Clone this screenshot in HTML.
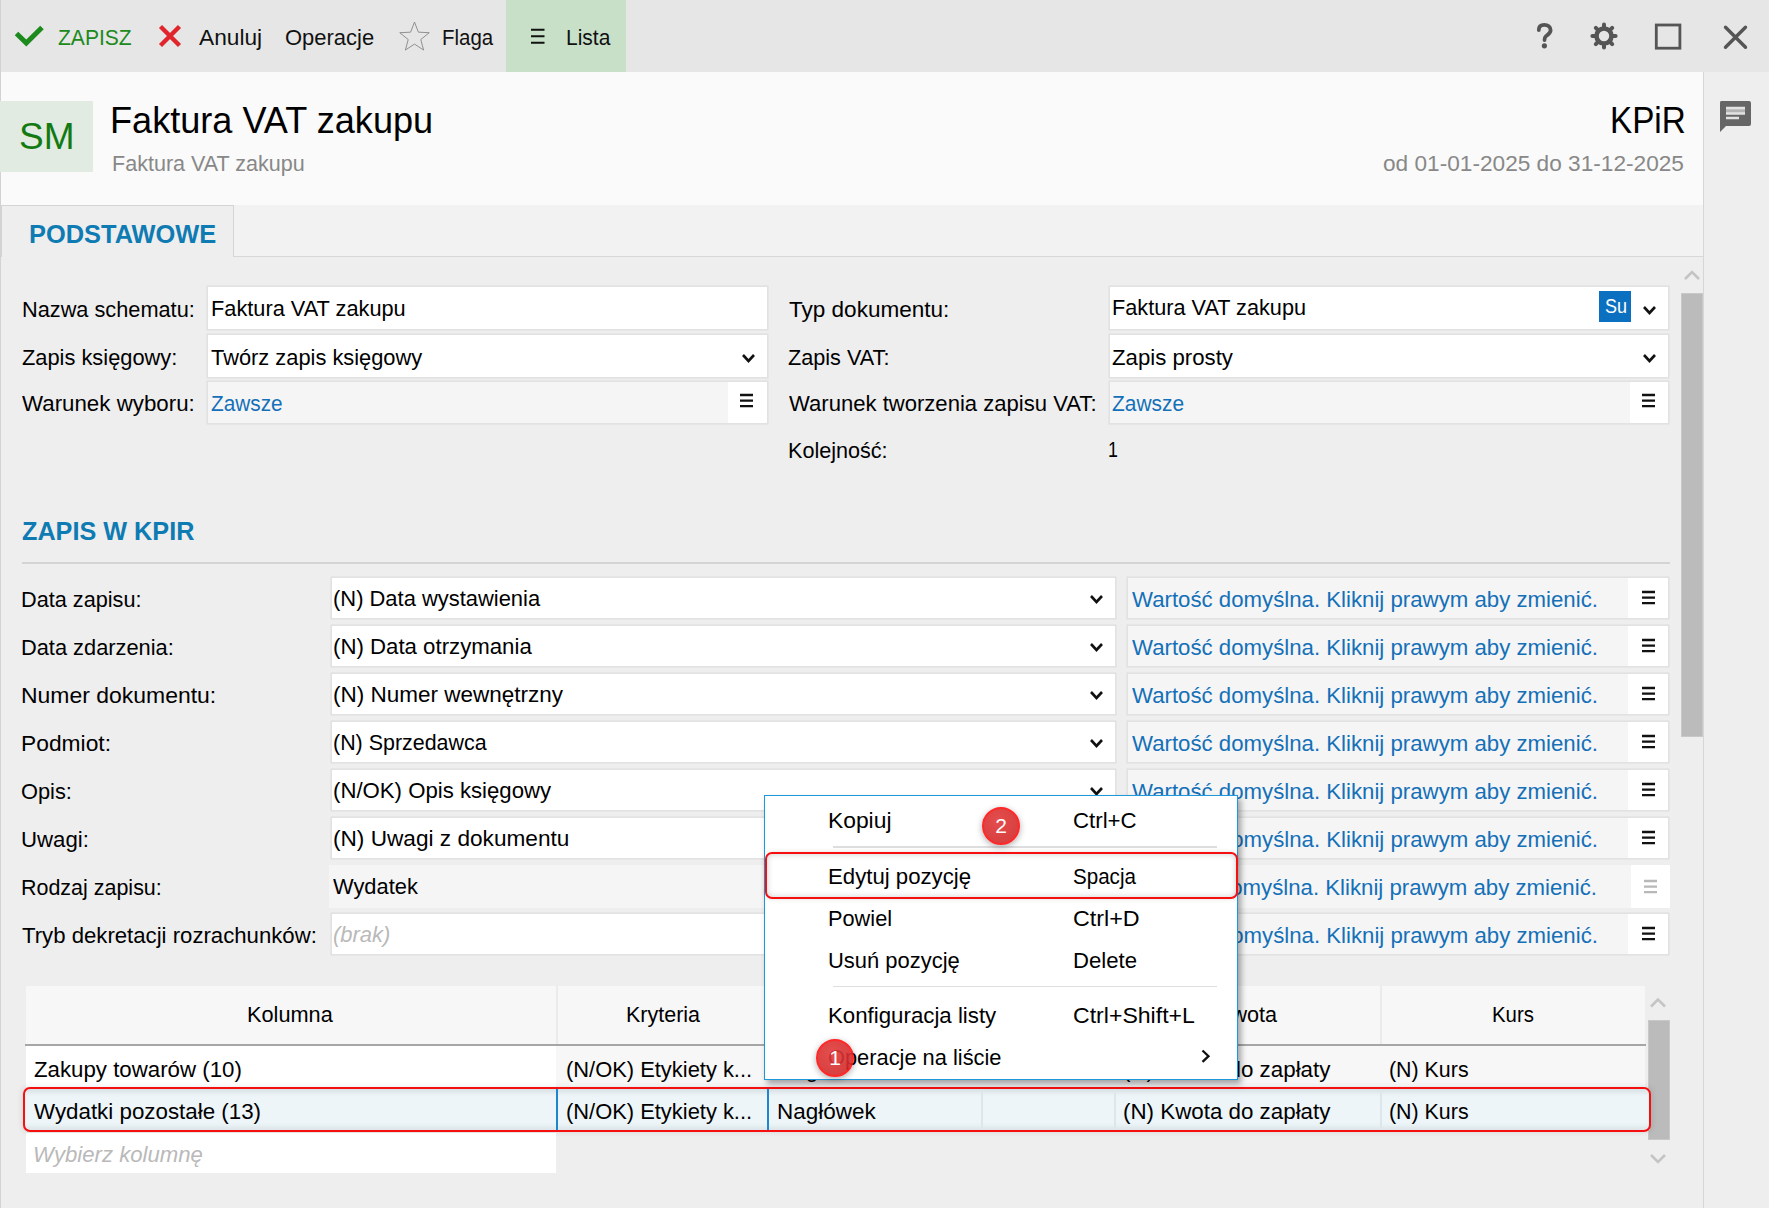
<!DOCTYPE html>
<html><head><meta charset="utf-8"><title>Faktura VAT zakupu</title>
<style>
html,body{margin:0;padding:0;}
body{width:1769px;height:1208px;position:relative;overflow:hidden;font-family:"Liberation Sans", sans-serif;background:#eeeeee;}
svg{overflow:visible}
</style></head><body>
<div style="position:absolute;left:0px;top:0px;width:1769px;height:72px;background:#e6e6e6;"></div>
<div style="position:absolute;left:0px;top:72px;width:1703px;height:133px;background:#fafafa;"></div>
<div style="position:absolute;left:0px;top:205px;width:1703px;height:52px;background:#f2f2f2;"></div>
<div style="position:absolute;left:0px;top:257px;width:1703px;height:951px;background:#eeeeee;"></div>
<div style="position:absolute;left:1703px;top:72px;width:66px;height:1136px;background:#eeeeee;"></div>
<div style="position:absolute;left:1703px;top:72px;width:1px;height:1136px;background:#d6d6d6;"></div>
<div style="position:absolute;left:0px;top:0px;width:1px;height:1208px;background:#d2d2d2;"></div>
<svg style="position:absolute;left:10px;top:20px;" width="40" height="32" viewBox="0 0 40 32"><polyline points="6.5,13.5 16.3,23 32,7.5" fill="none" stroke="#1c8a1c" stroke-width="5"/></svg>
<div style="position:absolute;top:27.200000000000003px;font-size:22px;line-height:22px;color:#1c8a1c;white-space:nowrap;left:57.70px;transform:scaleX(0.9573);transform-origin:0 0;">ZAPISZ</div>
<svg style="position:absolute;left:155px;top:21px;" width="30" height="30" viewBox="0 0 30 30"><path d="M5.5,5.5 L24.5,24.5 M24.5,5.5 L5.5,24.5" stroke="#e0262c" stroke-width="4.4"/></svg>
<div style="position:absolute;top:27px;font-size:22px;line-height:22px;color:#111;white-space:nowrap;left:199.00px;transform:scaleX(1.0321);transform-origin:0 0;">Anuluj</div>
<div style="position:absolute;top:27px;font-size:22px;line-height:22px;color:#111;white-space:nowrap;left:284.80px;transform:scaleX(0.9985);transform-origin:0 0;">Operacje</div>
<svg style="position:absolute;left:399px;top:21.3px;" width="32" height="34" viewBox="0 0 32 34"><polygon points="15.50,1.00 19.38,11.16 30.24,11.71 21.78,18.54 24.61,29.04 15.50,23.10 6.39,29.04 9.22,18.54 0.76,11.71 11.62,11.16" fill="none" stroke="#909090" stroke-width="1"/></svg>
<div style="position:absolute;top:27px;font-size:22px;line-height:22px;color:#111;white-space:nowrap;left:441.77px;transform:scaleX(0.9289);transform-origin:0 0;">Flaga</div>
<div style="position:absolute;left:506px;top:0px;width:120px;height:72px;background:#c8e0c8;"></div>
<svg style="position:absolute;left:528px;top:26px;" width="20" height="20" viewBox="0 0 20 20"><path d="M3,3.8 H16.5 M3,10.3 H16.5 M3,16.7 H16.5" stroke="#111" stroke-width="2"/></svg>
<div style="position:absolute;top:27px;font-size:22px;line-height:22px;color:#111;white-space:nowrap;left:565.55px;transform:scaleX(0.9538);transform-origin:0 0;">Lista</div>
<svg style="position:absolute;left:1532px;top:20px;" width="26" height="32" viewBox="0 0 26 32"><path d="M6.8,10 C6.8,6.3 9.3,4.8 12.3,4.8 C15.8,4.8 18.6,6.8 18.6,10.2 C18.6,13.2 15.8,14.6 13.8,16.4 C12.9,17.2 12.5,18 12.5,20" fill="none" stroke="#555" stroke-width="3.8" stroke-linecap="round"/><circle cx="12.4" cy="25.8" r="2.6" fill="#555"/></svg>
<svg style="position:absolute;left:1591px;top:23px;" width="26" height="26" viewBox="0 0 26 26"><line x1="21.50" y1="13.00" x2="24.60" y2="13.00" stroke="#555" stroke-width="4.0" stroke-linecap="round"/><line x1="19.01" y1="19.01" x2="21.20" y2="21.20" stroke="#555" stroke-width="4.0" stroke-linecap="round"/><line x1="13.00" y1="21.50" x2="13.00" y2="24.60" stroke="#555" stroke-width="4.0" stroke-linecap="round"/><line x1="6.99" y1="19.01" x2="4.80" y2="21.20" stroke="#555" stroke-width="4.0" stroke-linecap="round"/><line x1="4.50" y1="13.00" x2="1.40" y2="13.00" stroke="#555" stroke-width="4.0" stroke-linecap="round"/><line x1="6.99" y1="6.99" x2="4.80" y2="4.80" stroke="#555" stroke-width="4.0" stroke-linecap="round"/><line x1="13.00" y1="4.50" x2="13.00" y2="1.40" stroke="#555" stroke-width="4.0" stroke-linecap="round"/><line x1="19.01" y1="6.99" x2="21.20" y2="4.80" stroke="#555" stroke-width="4.0" stroke-linecap="round"/><circle cx="13" cy="13" r="7.5" fill="none" stroke="#555" stroke-width="4.6"/></svg>
<svg style="position:absolute;left:1654px;top:22px;" width="29" height="29" viewBox="0 0 29 29"><rect x="2.3" y="3" width="23.6" height="23.2" fill="none" stroke="#555" stroke-width="2.8"/></svg>
<svg style="position:absolute;left:1721px;top:23px;" width="29" height="29" viewBox="0 0 29 29"><path d="M4.5,4.2 L24.5,24.2 M24.5,4.2 L4.5,24.2" stroke="#555" stroke-width="3.4" stroke-linecap="round"/></svg>
<div style="position:absolute;left:0px;top:101px;width:93px;height:71px;background:#e1ebe1;"></div>
<div style="position:absolute;top:118px;font-size:37px;line-height:37px;color:#137a13;white-space:nowrap;left:18.80px;transform:scaleX(1.0004);transform-origin:0 0;">SM</div>
<div style="position:absolute;top:102px;font-size:37px;line-height:37px;color:#000;white-space:nowrap;left:110.27px;transform:scaleX(0.9759);transform-origin:0 0;">Faktura VAT zakupu</div>
<div style="position:absolute;top:153px;font-size:22px;line-height:22px;color:#888888;white-space:nowrap;left:112.02px;transform:scaleX(0.9793);transform-origin:0 0;">Faktura VAT zakupu</div>
<div style="position:absolute;top:102px;font-size:37px;line-height:37px;color:#000;white-space:nowrap;left:1609.80px;transform:scaleX(0.8985);transform-origin:0 0;">KPiR</div>
<div style="position:absolute;top:152.5px;font-size:22px;line-height:22px;color:#888888;white-space:nowrap;left:1383.30px;transform:scaleX(1.0294);transform-origin:0 0;">od 01-01-2025 do 31-12-2025</div>
<svg style="position:absolute;left:1717px;top:98px;" width="36" height="36" viewBox="0 0 36 36"><path d="M4,3 H32 Q34,3 34,5 V26 Q34,28 32,28 H9 L3,34 V5 Q3,3 4,3 Z" fill="#666"/><rect x="9" y="11" width="19" height="4" fill="#b4b4b4"/><path d="M9,10 H28 M9,15.5 H28 M9,20 H22" stroke="#e2e2e2" stroke-width="2.6"/></svg>
<div style="position:absolute;left:1px;top:205px;width:233px;height:52px;background:#eeeeee;border-left:1px solid #d4d4d4;border-right:1px solid #d4d4d4;border-top:1px solid #d4d4d4;box-sizing:border-box;"></div>
<div style="position:absolute;left:234px;top:256px;width:1469px;height:1px;background:#d8d8d8;"></div>
<div style="position:absolute;top:222px;font-size:25px;line-height:25px;color:#0f7bb3;white-space:nowrap;font-weight:700;left:29.38px;transform:scaleX(1.0166);transform-origin:0 0;">PODSTAWOWE</div>
<svg style="position:absolute;left:1682px;top:266px;" width="20" height="18" viewBox="0 0 20 18"><path d="M3,13 L10,6 L17,13" fill="none" stroke="#c4c4c4" stroke-width="2.6"/></svg>
<div style="position:absolute;left:1681px;top:293px;width:22px;height:444px;background:#bbbbbb;border:1.6px solid #c8c8c8;box-sizing:border-box;"></div>
<div style="position:absolute;top:299px;font-size:22px;line-height:22px;color:#000;white-space:nowrap;left:22.01px;transform:scaleX(0.9882);transform-origin:0 0;">Nazwa schematu:</div>
<div style="position:absolute;left:207.5px;top:286.5px;width:559.3px;height:42.0px;background:#fff;box-shadow:0 0 0 1.6px #e2e2e2;"></div>
<div style="position:absolute;top:297.5px;font-size:22px;line-height:22px;color:#000;white-space:nowrap;left:210.61px;transform:scaleX(0.9891);transform-origin:0 0;">Faktura VAT zakupu</div>
<div style="position:absolute;top:347px;font-size:22px;line-height:22px;color:#000;white-space:nowrap;left:21.90px;transform:scaleX(0.9923);transform-origin:0 0;">Zapis księgowy:</div>
<div style="position:absolute;left:207.5px;top:334.5px;width:559.3px;height:42.0px;background:#fff;box-shadow:0 0 0 1.6px #e2e2e2;"></div>
<div style="position:absolute;top:347px;font-size:22px;line-height:22px;color:#000;white-space:nowrap;left:210.90px;transform:scaleX(0.9928);transform-origin:0 0;">Twórz zapis księgowy</div>
<svg style="position:absolute;left:740px;top:351.5px;" width="17" height="12" viewBox="0 0 17 12"><path d="M3,3 L8.5,9.0 L14.0,3" fill="none" stroke="#111" stroke-width="2.6"/></svg>
<div style="position:absolute;top:393px;font-size:22px;line-height:22px;color:#000;white-space:nowrap;left:22.40px;transform:scaleX(1.0139);transform-origin:0 0;">Warunek wyboru:</div>
<div style="position:absolute;left:207.5px;top:381.5px;width:559.3px;height:41.5px;background:#f5f5f5;box-shadow:0 0 0 1.6px #e2e2e2;"></div>
<div style="position:absolute;left:728px;top:381.5px;width:38.8px;height:41.5px;background:#fff;"></div>
<div style="position:absolute;top:393px;font-size:22px;line-height:22px;color:#1470b8;white-space:nowrap;left:210.90px;transform:scaleX(0.9449);transform-origin:0 0;">Zawsze</div>
<svg style="position:absolute;left:739px;top:392.3px;" width="15" height="16.2" viewBox="0 0 15 16.2"><path d="M1,3 H14 M1,8.6 H14 M1,14.2 H14" stroke="#111" stroke-width="2.3"/></svg>
<div style="position:absolute;top:299px;font-size:22px;line-height:22px;color:#000;white-space:nowrap;left:789.00px;transform:scaleX(1.0243);transform-origin:0 0;">Typ dokumentu:</div>
<div style="position:absolute;left:1109.5px;top:286.5px;width:558.3px;height:42.0px;background:#fff;box-shadow:0 0 0 1.6px #e2e2e2;"></div>
<div style="position:absolute;top:297px;font-size:22px;line-height:22px;color:#000;white-space:nowrap;left:1111.81px;transform:scaleX(0.9855);transform-origin:0 0;">Faktura VAT zakupu</div>
<div style="position:absolute;left:1599px;top:291px;width:32px;height:31px;background:#0a70bf;"></div>
<div style="position:absolute;top:295.5px;font-size:20px;line-height:20px;color:#fff;white-space:nowrap;left:1605.00px;transform:scaleX(0.8997);transform-origin:0 0;">Su</div>
<svg style="position:absolute;left:1641px;top:303.5px;" width="17" height="12" viewBox="0 0 17 12"><path d="M3,3 L8.5,9.0 L14.0,3" fill="none" stroke="#111" stroke-width="2.6"/></svg>
<div style="position:absolute;top:347px;font-size:22px;line-height:22px;color:#000;white-space:nowrap;left:788.40px;transform:scaleX(0.9834);transform-origin:0 0;">Zapis VAT:</div>
<div style="position:absolute;left:1109.5px;top:334.5px;width:558.3px;height:42.0px;background:#fff;box-shadow:0 0 0 1.6px #e2e2e2;"></div>
<div style="position:absolute;top:347px;font-size:22px;line-height:22px;color:#000;white-space:nowrap;left:1111.90px;transform:scaleX(1.0090);transform-origin:0 0;">Zapis prosty</div>
<svg style="position:absolute;left:1641px;top:351.5px;" width="17" height="12" viewBox="0 0 17 12"><path d="M3,3 L8.5,9.0 L14.0,3" fill="none" stroke="#111" stroke-width="2.6"/></svg>
<div style="position:absolute;top:393px;font-size:22px;line-height:22px;color:#000;white-space:nowrap;left:789.00px;transform:scaleX(1.0033);transform-origin:0 0;">Warunek tworzenia zapisu VAT:</div>
<div style="position:absolute;left:1109.5px;top:381.5px;width:558.3px;height:41.5px;background:#f5f5f5;box-shadow:0 0 0 1.6px #e2e2e2;"></div>
<div style="position:absolute;left:1630px;top:381.5px;width:37.8px;height:41.5px;background:#fff;"></div>
<div style="position:absolute;top:393px;font-size:22px;line-height:22px;color:#1470b8;white-space:nowrap;left:1111.90px;transform:scaleX(0.9502);transform-origin:0 0;">Zawsze</div>
<svg style="position:absolute;left:1641px;top:392.3px;" width="15" height="16.2" viewBox="0 0 15 16.2"><path d="M1,3 H14 M1,8.6 H14 M1,14.2 H14" stroke="#111" stroke-width="2.3"/></svg>
<div style="position:absolute;top:439.5px;font-size:22px;line-height:22px;color:#000;white-space:nowrap;left:788.02px;transform:scaleX(0.9810);transform-origin:0 0;">Kolejność:</div>
<div style="position:absolute;top:439px;font-size:22px;line-height:22px;color:#000;white-space:nowrap;left:1108.49px;transform:scaleX(0.8091);transform-origin:0 0;">1</div>
<div style="position:absolute;top:519px;font-size:25px;line-height:25px;color:#0f7bb3;white-space:nowrap;font-weight:700;left:22.00px;transform:scaleX(1.0089);transform-origin:0 0;">ZAPIS W KPIR</div>
<div style="position:absolute;left:22px;top:562.3px;width:1648px;height:1.7px;background:#d4d4d4;"></div>
<div style="position:absolute;top:589px;font-size:22px;line-height:22px;color:#000;white-space:nowrap;left:21.41px;transform:scaleX(0.9852);transform-origin:0 0;">Data zapisu:</div>
<div style="position:absolute;left:331.5px;top:578px;width:783.5px;height:40px;background:#fff;box-shadow:0 0 0 1.6px #e2e2e2;"></div>
<div style="position:absolute;top:588px;font-size:22px;line-height:22px;color:#000;white-space:nowrap;left:333.10px;transform:scaleX(0.9966);transform-origin:0 0;">(N) Data wystawienia</div>
<svg style="position:absolute;left:1088px;top:592.5px;" width="17" height="12" viewBox="0 0 17 12"><path d="M3,3 L8.5,9.0 L14.0,3" fill="none" stroke="#111" stroke-width="2.6"/></svg>
<div style="position:absolute;left:1128px;top:578px;width:540px;height:40px;background:#f5f5f5;box-shadow:0 0 0 1.6px #e2e2e2;"></div>
<div style="position:absolute;left:1628px;top:578px;width:40px;height:40px;background:#fff;"></div>
<div style="position:absolute;top:589px;font-size:22px;line-height:22px;color:#1470b8;white-space:nowrap;left:1132.20px;transform:scaleX(1.0100);transform-origin:0 0;">Wartość domyślna. Kliknij prawym aby zmienić.</div>
<svg style="position:absolute;left:1641px;top:588.5px;" width="15" height="16.2" viewBox="0 0 15 16.2"><path d="M1,3 H14 M1,8.6 H14 M1,14.2 H14" stroke="#111" stroke-width="2.3"/></svg>
<div style="position:absolute;top:637px;font-size:22px;line-height:22px;color:#000;white-space:nowrap;left:21.41px;transform:scaleX(0.9910);transform-origin:0 0;">Data zdarzenia:</div>
<div style="position:absolute;left:331.5px;top:626px;width:783.5px;height:40px;background:#fff;box-shadow:0 0 0 1.6px #e2e2e2;"></div>
<div style="position:absolute;top:636px;font-size:22px;line-height:22px;color:#000;white-space:nowrap;left:333.09px;transform:scaleX(1.0097);transform-origin:0 0;">(N) Data otrzymania</div>
<svg style="position:absolute;left:1088px;top:640.5px;" width="17" height="12" viewBox="0 0 17 12"><path d="M3,3 L8.5,9.0 L14.0,3" fill="none" stroke="#111" stroke-width="2.6"/></svg>
<div style="position:absolute;left:1128px;top:626px;width:540px;height:40px;background:#f5f5f5;box-shadow:0 0 0 1.6px #e2e2e2;"></div>
<div style="position:absolute;left:1628px;top:626px;width:40px;height:40px;background:#fff;"></div>
<div style="position:absolute;top:637px;font-size:22px;line-height:22px;color:#1470b8;white-space:nowrap;left:1132.20px;transform:scaleX(1.0100);transform-origin:0 0;">Wartość domyślna. Kliknij prawym aby zmienić.</div>
<svg style="position:absolute;left:1641px;top:636.5px;" width="15" height="16.2" viewBox="0 0 15 16.2"><path d="M1,3 H14 M1,8.6 H14 M1,14.2 H14" stroke="#111" stroke-width="2.3"/></svg>
<div style="position:absolute;top:685px;font-size:22px;line-height:22px;color:#000;white-space:nowrap;left:21.36px;transform:scaleX(1.0434);transform-origin:0 0;">Numer dokumentu:</div>
<div style="position:absolute;left:331.5px;top:674px;width:783.5px;height:40px;background:#fff;box-shadow:0 0 0 1.6px #e2e2e2;"></div>
<div style="position:absolute;top:684px;font-size:22px;line-height:22px;color:#000;white-space:nowrap;left:333.08px;transform:scaleX(1.0226);transform-origin:0 0;">(N) Numer wewnętrzny</div>
<svg style="position:absolute;left:1088px;top:688.5px;" width="17" height="12" viewBox="0 0 17 12"><path d="M3,3 L8.5,9.0 L14.0,3" fill="none" stroke="#111" stroke-width="2.6"/></svg>
<div style="position:absolute;left:1128px;top:674px;width:540px;height:40px;background:#f5f5f5;box-shadow:0 0 0 1.6px #e2e2e2;"></div>
<div style="position:absolute;left:1628px;top:674px;width:40px;height:40px;background:#fff;"></div>
<div style="position:absolute;top:685px;font-size:22px;line-height:22px;color:#1470b8;white-space:nowrap;left:1132.20px;transform:scaleX(1.0100);transform-origin:0 0;">Wartość domyślna. Kliknij prawym aby zmienić.</div>
<svg style="position:absolute;left:1641px;top:684.5px;" width="15" height="16.2" viewBox="0 0 15 16.2"><path d="M1,3 H14 M1,8.6 H14 M1,14.2 H14" stroke="#111" stroke-width="2.3"/></svg>
<div style="position:absolute;top:733px;font-size:22px;line-height:22px;color:#000;white-space:nowrap;left:21.36px;transform:scaleX(1.0365);transform-origin:0 0;">Podmiot:</div>
<div style="position:absolute;left:331.5px;top:722px;width:783.5px;height:40px;background:#fff;box-shadow:0 0 0 1.6px #e2e2e2;"></div>
<div style="position:absolute;top:732px;font-size:22px;line-height:22px;color:#000;white-space:nowrap;left:333.13px;transform:scaleX(0.9741);transform-origin:0 0;">(N) Sprzedawca</div>
<svg style="position:absolute;left:1088px;top:736.5px;" width="17" height="12" viewBox="0 0 17 12"><path d="M3,3 L8.5,9.0 L14.0,3" fill="none" stroke="#111" stroke-width="2.6"/></svg>
<div style="position:absolute;left:1128px;top:722px;width:540px;height:40px;background:#f5f5f5;box-shadow:0 0 0 1.6px #e2e2e2;"></div>
<div style="position:absolute;left:1628px;top:722px;width:40px;height:40px;background:#fff;"></div>
<div style="position:absolute;top:733px;font-size:22px;line-height:22px;color:#1470b8;white-space:nowrap;left:1132.20px;transform:scaleX(1.0100);transform-origin:0 0;">Wartość domyślna. Kliknij prawym aby zmienić.</div>
<svg style="position:absolute;left:1641px;top:732.5px;" width="15" height="16.2" viewBox="0 0 15 16.2"><path d="M1,3 H14 M1,8.6 H14 M1,14.2 H14" stroke="#111" stroke-width="2.3"/></svg>
<div style="position:absolute;top:781px;font-size:22px;line-height:22px;color:#000;white-space:nowrap;left:21.41px;transform:scaleX(0.9912);transform-origin:0 0;">Opis:</div>
<div style="position:absolute;left:331.5px;top:770px;width:783.5px;height:40px;background:#fff;box-shadow:0 0 0 1.6px #e2e2e2;"></div>
<div style="position:absolute;top:780px;font-size:22px;line-height:22px;color:#000;white-space:nowrap;left:333.09px;transform:scaleX(1.0080);transform-origin:0 0;">(N/OK) Opis księgowy</div>
<svg style="position:absolute;left:1088px;top:784.5px;" width="17" height="12" viewBox="0 0 17 12"><path d="M3,3 L8.5,9.0 L14.0,3" fill="none" stroke="#111" stroke-width="2.6"/></svg>
<div style="position:absolute;left:1128px;top:770px;width:540px;height:40px;background:#f5f5f5;box-shadow:0 0 0 1.6px #e2e2e2;"></div>
<div style="position:absolute;left:1628px;top:770px;width:40px;height:40px;background:#fff;"></div>
<div style="position:absolute;top:781px;font-size:22px;line-height:22px;color:#1470b8;white-space:nowrap;left:1132.20px;transform:scaleX(1.0100);transform-origin:0 0;">Wartość domyślna. Kliknij prawym aby zmienić.</div>
<svg style="position:absolute;left:1641px;top:780.5px;" width="15" height="16.2" viewBox="0 0 15 16.2"><path d="M1,3 H14 M1,8.6 H14 M1,14.2 H14" stroke="#111" stroke-width="2.3"/></svg>
<div style="position:absolute;top:829px;font-size:22px;line-height:22px;color:#000;white-space:nowrap;left:21.39px;transform:scaleX(1.0102);transform-origin:0 0;">Uwagi:</div>
<div style="position:absolute;left:331.5px;top:818px;width:783.5px;height:40px;background:#fff;box-shadow:0 0 0 1.6px #e2e2e2;"></div>
<div style="position:absolute;top:828px;font-size:22px;line-height:22px;color:#000;white-space:nowrap;left:333.07px;transform:scaleX(1.0284);transform-origin:0 0;">(N) Uwagi z dokumentu</div>
<svg style="position:absolute;left:1088px;top:832.5px;" width="17" height="12" viewBox="0 0 17 12"><path d="M3,3 L8.5,9.0 L14.0,3" fill="none" stroke="#111" stroke-width="2.6"/></svg>
<div style="position:absolute;left:1128px;top:818px;width:540px;height:40px;background:#f5f5f5;box-shadow:0 0 0 1.6px #e2e2e2;"></div>
<div style="position:absolute;left:1628px;top:818px;width:40px;height:40px;background:#fff;"></div>
<div style="position:absolute;top:829px;font-size:22px;line-height:22px;color:#1470b8;white-space:nowrap;left:1132.20px;transform:scaleX(1.0100);transform-origin:0 0;">Wartość domyślna. Kliknij prawym aby zmienić.</div>
<svg style="position:absolute;left:1641px;top:828.5px;" width="15" height="16.2" viewBox="0 0 15 16.2"><path d="M1,3 H14 M1,8.6 H14 M1,14.2 H14" stroke="#111" stroke-width="2.3"/></svg>
<div style="position:absolute;top:877px;font-size:22px;line-height:22px;color:#000;white-space:nowrap;left:21.42px;transform:scaleX(0.9755);transform-origin:0 0;">Rodzaj zapisu:</div>
<div style="position:absolute;left:329px;top:864.5px;width:788px;height:43px;background:#f5f5f5;"></div>
<div style="position:absolute;top:876px;font-size:22px;line-height:22px;color:#000;white-space:nowrap;left:333.10px;transform:scaleX(0.9932);transform-origin:0 0;">Wydatek</div>
<div style="position:absolute;left:1126px;top:864.5px;width:544px;height:43px;background:#f5f5f5;"></div>
<div style="position:absolute;left:1630.5px;top:864.5px;width:39.5px;height:43px;background:#fff;"></div>
<div style="position:absolute;top:877px;font-size:22px;line-height:22px;color:#1470b8;white-space:nowrap;left:1130.70px;transform:scaleX(1.0100);transform-origin:0 0;">Wartość domyślna. Kliknij prawym aby zmienić.</div>
<svg style="position:absolute;left:1643px;top:878px;" width="15" height="16.2" viewBox="0 0 15 16.2"><path d="M1,3 H14 M1,8.6 H14 M1,14.2 H14" stroke="#b8b8b8" stroke-width="2.3"/></svg>
<div style="position:absolute;top:925px;font-size:22px;line-height:22px;color:#000;white-space:nowrap;left:22.40px;transform:scaleX(1.0075);transform-origin:0 0;">Tryb dekretacji rozrachunków:</div>
<div style="position:absolute;left:331.5px;top:914px;width:783.5px;height:40px;background:#fff;box-shadow:0 0 0 1.6px #e2e2e2;"></div>
<div style="position:absolute;top:924px;font-size:22px;line-height:22px;color:#b9b9b9;white-space:nowrap;font-style:italic;left:333.10px;transform:scaleX(0.9978);transform-origin:0 0;">(brak)</div>
<div style="position:absolute;left:1128px;top:914px;width:540px;height:40px;background:#f5f5f5;box-shadow:0 0 0 1.6px #e2e2e2;"></div>
<div style="position:absolute;left:1628px;top:914px;width:40px;height:40px;background:#fff;"></div>
<div style="position:absolute;top:925px;font-size:22px;line-height:22px;color:#1470b8;white-space:nowrap;left:1132.20px;transform:scaleX(1.0100);transform-origin:0 0;">Wartość domyślna. Kliknij prawym aby zmienić.</div>
<svg style="position:absolute;left:1641px;top:924.5px;" width="15" height="16.2" viewBox="0 0 15 16.2"><path d="M1,3 H14 M1,8.6 H14 M1,14.2 H14" stroke="#111" stroke-width="2.3"/></svg>
<div style="position:absolute;left:26px;top:985.5px;width:1619px;height:59px;background:#f7f7f7;"></div>
<div style="position:absolute;left:556px;top:985.5px;width:2px;height:59px;background:#ebebeb;"></div>
<div style="position:absolute;left:769px;top:985.5px;width:2px;height:59px;background:#ebebeb;"></div>
<div style="position:absolute;left:981px;top:985.5px;width:2px;height:59px;background:#ebebeb;"></div>
<div style="position:absolute;left:1114px;top:985.5px;width:2px;height:59px;background:#ebebeb;"></div>
<div style="position:absolute;left:1380px;top:985.5px;width:2px;height:59px;background:#ebebeb;"></div>
<div style="position:absolute;left:25px;top:1044px;width:1621px;height:2px;background:#a6a6a6;"></div>
<div style="position:absolute;top:1004px;font-size:22px;line-height:22px;color:#000;white-space:nowrap;left:247.41px;transform:scaleX(0.9874);transform-origin:0 0;">Kolumna</div>
<div style="position:absolute;top:1004px;font-size:22px;line-height:22px;color:#000;white-space:nowrap;left:625.92px;transform:scaleX(0.9767);transform-origin:0 0;">Kryteria</div>
<div style="position:absolute;top:1004px;font-size:22px;line-height:22px;color:#000;white-space:nowrap;left:1216.62px;transform:scaleX(0.9818);transform-origin:0 0;">Kwota</div>
<div style="position:absolute;top:1004px;font-size:22px;line-height:22px;color:#000;white-space:nowrap;left:1492.07px;transform:scaleX(0.9269);transform-origin:0 0;">Kurs</div>
<div style="position:absolute;left:26px;top:1046px;width:530px;height:41px;background:#ffffff;"></div>
<div style="position:absolute;left:556px;top:1046px;width:1089px;height:41px;background:#f7f7f7;"></div>
<div style="position:absolute;top:1059px;font-size:22px;line-height:22px;color:#000;white-space:nowrap;left:34.00px;transform:scaleX(1.0118);transform-origin:0 0;">Zakupy towarów (10)</div>
<div style="position:absolute;top:1059px;font-size:22px;line-height:22px;color:#000;white-space:nowrap;left:566.00px;transform:scaleX(0.9951);transform-origin:0 0;">(N/OK) Etykiety k...</div>
<div style="position:absolute;top:1059px;font-size:22px;line-height:22px;color:#000;white-space:nowrap;left:777.28px;transform:scaleX(1.0217);transform-origin:0 0;">Nagłówek</div>
<div style="position:absolute;top:1059px;font-size:22px;line-height:22px;color:#000;white-space:nowrap;left:1122.98px;transform:scaleX(1.0158);transform-origin:0 0;">(N) Kwota do zapłaty</div>
<div style="position:absolute;top:1059px;font-size:22px;line-height:22px;color:#000;white-space:nowrap;left:1389.43px;transform:scaleX(0.9717);transform-origin:0 0;">(N) Kurs</div>
<svg style="position:absolute;left:1648px;top:994px;" width="20" height="18" viewBox="0 0 20 18"><path d="M3,12.5 L10,5.5 L17,12.5" fill="none" stroke="#c4c4c4" stroke-width="2.6"/></svg>
<div style="position:absolute;left:1648px;top:1020px;width:22px;height:120px;background:#bbbbbb;border:1.6px solid #c8c8c8;box-sizing:border-box;"></div>
<svg style="position:absolute;left:1648px;top:1150px;" width="20" height="18" viewBox="0 0 20 18"><path d="M3,5 L10,12 L17,5" fill="none" stroke="#c4c4c4" stroke-width="2.6"/></svg>
<div style="position:absolute;left:24px;top:1089px;width:1626px;height:41px;background:#edf5f8;box-shadow: inset 0 5px 5px -2px rgba(60,80,90,0.13), inset 0 -5px 5px -2px rgba(60,80,90,0.10), 0 0 7px rgba(0,0,0,0.18);"></div>
<div style="position:absolute;left:981px;top:1089px;width:2px;height:41px;background:#dde6ea;"></div>
<div style="position:absolute;left:1114px;top:1089px;width:2px;height:41px;background:#dde6ea;"></div>
<div style="position:absolute;left:1380px;top:1089px;width:2px;height:41px;background:#dde6ea;"></div>
<div style="position:absolute;top:1100.5px;font-size:22px;line-height:22px;color:#000;white-space:nowrap;left:34.00px;transform:scaleX(1.0156);transform-origin:0 0;">Wydatki pozostałe (13)</div>
<div style="position:absolute;top:1100.5px;font-size:22px;line-height:22px;color:#000;white-space:nowrap;left:566.00px;transform:scaleX(0.9951);transform-origin:0 0;">(N/OK) Etykiety k...</div>
<div style="position:absolute;top:1100.5px;font-size:22px;line-height:22px;color:#000;white-space:nowrap;left:777.28px;transform:scaleX(1.0217);transform-origin:0 0;">Nagłówek</div>
<div style="position:absolute;top:1100.5px;font-size:22px;line-height:22px;color:#000;white-space:nowrap;left:1122.98px;transform:scaleX(1.0158);transform-origin:0 0;">(N) Kwota do zapłaty</div>
<div style="position:absolute;top:1100.5px;font-size:22px;line-height:22px;color:#000;white-space:nowrap;left:1389.43px;transform:scaleX(0.9717);transform-origin:0 0;">(N) Kurs</div>
<div style="position:absolute;left:555.5px;top:1087px;width:213px;height:44.5px;border:2.6px solid #1c87cc;box-sizing:border-box;"></div>
<div style="position:absolute;left:23px;top:1087px;width:1628px;height:45px;border:2.6px solid #f50f0f;border-radius:7px;box-sizing:border-box;"></div>
<div style="position:absolute;left:26px;top:1133px;width:530px;height:40px;background:#ffffff;"></div>
<div style="position:absolute;top:1144px;font-size:22px;line-height:22px;color:#b9b9b9;white-space:nowrap;font-style:italic;left:32.99px;transform:scaleX(1.0073);transform-origin:0 0;">Wybierz kolumnę</div>
<div style="position:absolute;left:764px;top:795px;width:474px;height:285px;background:#ffffff;border:1.5px solid #1e98dc;box-sizing:border-box;box-shadow:3px 4px 6px rgba(0,0,0,0.35);"></div>
<div style="position:absolute;top:810px;font-size:22px;line-height:22px;color:#000;white-space:nowrap;left:828.26px;transform:scaleX(1.0377);transform-origin:0 0;">Kopiuj</div>
<div style="position:absolute;top:810px;font-size:22px;line-height:22px;color:#000;white-space:nowrap;left:1072.59px;transform:scaleX(1.0103);transform-origin:0 0;">Ctrl+C</div>
<div style="position:absolute;top:866px;font-size:22px;line-height:22px;color:#000;white-space:nowrap;left:828.29px;transform:scaleX(1.0084);transform-origin:0 0;">Edytuj pozycję</div>
<div style="position:absolute;top:866px;font-size:22px;line-height:22px;color:#000;white-space:nowrap;left:1072.66px;transform:scaleX(0.9354);transform-origin:0 0;">Spacja</div>
<div style="position:absolute;top:907.6px;font-size:22px;line-height:22px;color:#000;white-space:nowrap;left:828.31px;transform:scaleX(0.9886);transform-origin:0 0;">Powiel</div>
<div style="position:absolute;top:907.6px;font-size:22px;line-height:22px;color:#000;white-space:nowrap;left:1072.54px;transform:scaleX(1.0596);transform-origin:0 0;">Ctrl+D</div>
<div style="position:absolute;top:950px;font-size:22px;line-height:22px;color:#000;white-space:nowrap;left:828.30px;transform:scaleX(0.9982);transform-origin:0 0;">Usuń pozycję</div>
<div style="position:absolute;top:950px;font-size:22px;line-height:22px;color:#000;white-space:nowrap;left:1072.59px;transform:scaleX(1.0055);transform-origin:0 0;">Delete</div>
<div style="position:absolute;top:1004.6px;font-size:22px;line-height:22px;color:#000;white-space:nowrap;left:828.29px;transform:scaleX(1.0115);transform-origin:0 0;">Konfiguracja listy</div>
<div style="position:absolute;top:1004.6px;font-size:22px;line-height:22px;color:#000;white-space:nowrap;left:1072.55px;transform:scaleX(1.0493);transform-origin:0 0;">Ctrl+Shift+L</div>
<div style="position:absolute;top:1047px;font-size:22px;line-height:22px;color:#000;white-space:nowrap;left:828.31px;transform:scaleX(0.9918);transform-origin:0 0;">Operacje na liście</div>
<div style="position:absolute;left:833px;top:846px;width:384px;height:1.5px;background:#dedede;"></div>
<div style="position:absolute;left:833px;top:985.5px;width:384px;height:1.5px;background:#dedede;"></div>
<svg style="position:absolute;left:1198px;top:1047px;" width="16" height="18" viewBox="0 0 16 18"><path d="M4.5,3.5 L10.5,9.2 L4.5,14.8" fill="none" stroke="#111" stroke-width="2.3"/></svg>
<div style="position:absolute;left:765px;top:852px;width:472.5px;height:46.5px;border:2.5px solid #f50f0f;border-radius:7px;box-sizing:border-box;box-shadow: inset 0 0 6px rgba(0,0,0,0.20), 0 0 5px rgba(0,0,0,0.12);"></div>
<div style="position:absolute;left:982.0px;top:806.8px;width:38.4px;height:38.4px;border-radius:50%;background:radial-gradient(circle at 40% 35%, #e23b3b, #d02626);box-sizing:border-box;border:2px solid #ff1212;box-shadow:0 2px 6px rgba(0,0,0,0.35);opacity:0.9;"></div>
<div style="position:absolute;top:814.5px;font-size:21px;line-height:21px;color:#ffffff;white-space:nowrap;left:701.2px;width:600px;text-align:center;">2</div>
<div style="position:absolute;left:815.8px;top:1038.8px;width:38.4px;height:38.4px;border-radius:50%;background:radial-gradient(circle at 40% 35%, #e23b3b, #d02626);box-sizing:border-box;border:2px solid #ff1212;box-shadow:0 2px 6px rgba(0,0,0,0.35);opacity:0.9;"></div>
<div style="position:absolute;top:1046.5px;font-size:21px;line-height:21px;color:#ffffff;white-space:nowrap;left:535px;width:600px;text-align:center;">1</div>
</body></html>
